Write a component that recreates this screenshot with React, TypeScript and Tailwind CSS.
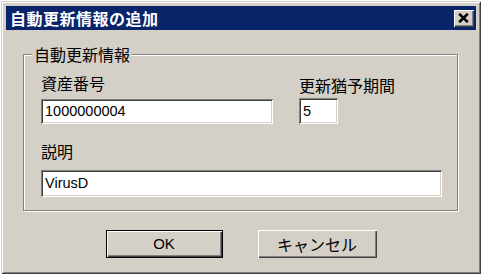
import React from "react";

const raised =
  "shadow-[inset_1px_1px_0_#ffffff,inset_-1px_-1px_0_#404040,inset_-2px_-2px_0_#808080]";
const sunken =
  "shadow-[inset_1px_1px_0_#808080,inset_-1px_-1px_0_#ffffff,inset_2px_2px_0_#404040,inset_-2px_-2px_0_#d4d0c8]";

const jp = "font-['Noto_Sans_CJK_JP',sans-serif]";
const latin = "font-['Liberation_Sans','Noto_Sans_CJK_JP',sans-serif]";

function Field({ value, className }: { value: string; className: string }) {
  return (
    <div
      className={`bg-white ${sunken} ${latin} text-[14.5px] text-black flex items-center pl-[4px] leading-none ${className}`}
    >
      {value}
    </div>
  );
}

export default function App() {
  return (
    <div className="w-[485px] h-[277px] bg-white pt-[1px] pl-[1px]">
      <div className="w-[480px] h-[273px] bg-[#d4d0c8] p-[5px] flex flex-col shadow-[inset_1px_1px_0_#d4d0c8,inset_-1px_-1px_0_#404040,inset_2px_2px_0_#ffffff,inset_-2px_-2px_0_#808080]">
        {/* Title bar */}
        <div className="h-[24px] bg-[#0a246a] flex items-center justify-between pl-[4px] pr-[2px] shrink-0">
          <span className={`${jp} text-white font-bold text-[16px] tracking-[0.5px] leading-none`}>
            自動更新情報の追加
          </span>
          <div className={`w-[20px] h-[17px] bg-[#d4d0c8] ${raised} flex items-center justify-center pr-[1px]`}>
            <svg width="11" height="10" viewBox="0 0 11 10">
              <path d="M1.2 0.8 L9.8 9.2 M9.8 0.8 L1.2 9.2" stroke="#000" strokeWidth="2.6" />
            </svg>
          </div>
        </div>

        {/* Group box */}
        <div className="relative mt-[24px] ml-[17px] w-[435px] border border-[#808080] shadow-[inset_1px_1px_0_#ffffff,1px_1px_0_#ffffff] pt-[18px] pl-[17px] pr-[15px] pb-[13px]">
          <span
            className={`absolute left-[8px] top-[-11px] px-[2px] bg-[#d4d0c8] ${jp} text-[16px] leading-[20px] text-black`}
          >
            自動更新情報
          </span>
          <div className="flex gap-[26px]">
            <div className="flex flex-col">
              <span className={`${jp} text-[16px] leading-[20px] text-black`}>資産番号</span>
              <Field value="1000000004" className="mt-[6px] w-[232px] h-[25px]" />
            </div>
            <div className="flex flex-col">
              <span className={`${jp} text-[16px] leading-[20px] text-black mt-[2px] whitespace-nowrap`}>
                更新猶予期間
              </span>
              <Field value="5" className="mt-[3px] w-[39px] h-[26px]" />
            </div>
          </div>
          <div className="flex flex-col mt-[17px]">
            <span className={`${jp} text-[16px] leading-[20px] text-black`}>説明</span>
            <Field value="VirusD" className="mt-[9px] w-[401px] h-[27px]" />
          </div>
        </div>

        {/* Buttons */}
        <div className="flex justify-center gap-[35px] mt-[19px]">
          <div className="w-[117px] h-[28px] border border-black">
            <div
              className={`w-full h-full bg-[#d4d0c8] ${raised} flex items-center justify-center ${latin} text-[15px] text-black`}
            >
              OK
            </div>
          </div>
          <div
            className={`w-[119px] h-[28px] bg-[#d4d0c8] ${raised} flex items-center justify-center ${jp} text-[16px] text-black`}
          >
            キャンセル
          </div>
        </div>
      </div>
    </div>
  );
}
